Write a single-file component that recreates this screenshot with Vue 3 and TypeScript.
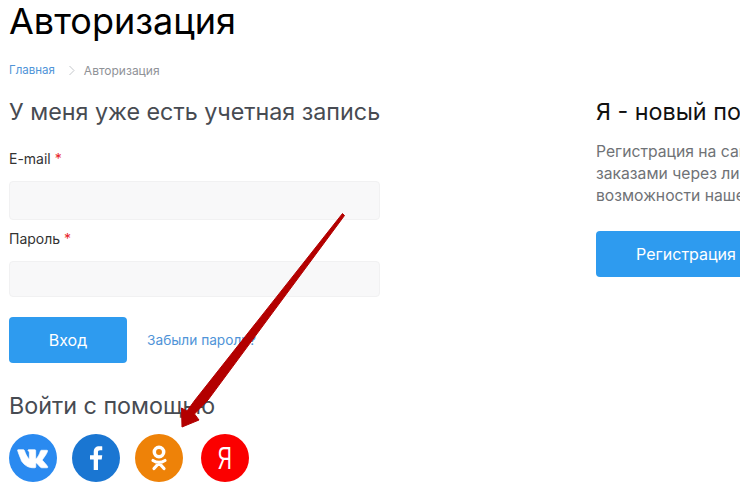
<script setup lang="ts">
const socials = [
  { name: 'vk', color: '#2a8af0' },
  { name: 'fb', color: '#1a76d2' },
  { name: 'ok', color: '#ee8208' },
  { name: 'ya', color: '#fb0000' },
]
</script>

<template>
  <div class="page">
    <h1 class="title">Авторизация</h1>
    <nav class="crumbs">
      <a class="crumb-link">Главная</a>
      <svg class="crumb-sep" width="8" height="11" viewBox="0 0 8 11"><path d="M1.5 1l4.5 4.5L1.5 10" fill="none" stroke="#c4c7cb" stroke-width="1"/></svg>
      <span class="crumb-current">Авторизация</span>
    </nav>
    <div class="columns">
      <section class="left">
        <h2 class="heading">У меня уже есть учетная запись</h2>
        <label class="label first">E-mail <span class="req">*</span></label>
        <div class="input tall"></div>
        <label class="label second">Пароль <span class="req">*</span></label>
        <div class="input"></div>
        <div class="actions">
          <button class="btn login">Вход</button>
          <a class="forgot">Забыли пароль?</a>
        </div>
        <h2 class="heading social-heading">Войти с помощью</h2>
        <div class="socials">
          <div v-for="s in socials" :key="s.name" class="circle" :class="s.name" :style="{ background: s.color }">
            <svg v-if="s.name === 'vk'" width="33" height="21" viewBox="0 0 32 20"><path fill="#fff" stroke="#fff" stroke-width="0.7" d="M1 1.500h5.200c.5 0 .8.200 1 .8 1 3 2.400 6 4 7.600.4.400.8.300.8-.4V4.600c0-1.300-.8-1.700-1.300-2.300-.2-.3 0-.8.500-.8h6.200c.5 0 .7.300.7.800v7.200c0 .6.400.8.700.5 1.500-1.500 3-4 4-7.300.2-.5.500-.7 1-.7h5c.8 0 1 .4.800 1-.8 2.700-3.200 5.500-4.700 7.700-.4.500-.4.900 0 1.400 1.300 1.500 3.600 3.500 4.800 5.700.4.700.1 1.200-.7 1.200h-5c-.7 0-1-.3-1.500-.8-1.100-1.300-2.200-2.700-3.500-3.700-.4-.3-.8-.2-.8.400v3c0 .7-.2 1.100-1.400 1.100-6 .2-9.600-2.500-12.600-6.800C4.300 11.500 2.300 7.500.700 2.500.400 1.800.600 1.500 1 1.500z"/></svg>
            <svg v-else-if="s.name === 'fb'" width="17" height="26" viewBox="0 0 18 28"><path fill="#fff" d="M6 27V15.500H2V11h4V7.600C6 3.500 8.400 1.400 12 1.400c1.500 0 2.800.1 3.200.2v4.100h-2.300c-1.900 0-2.300.9-2.300 2.200V11h4.600l-.6 4.500h-4V27z"/></svg>
            <svg v-else-if="s.name === 'ok'" width="20" height="28" viewBox="0 0 20 28"><circle cx="10" cy="8" r="4.700" fill="none" stroke="#fff" stroke-width="3.500"/><path d="M4 16.500c3.600 2.300 8.400 2.300 12 0M10 19L5 24.500M10 19l5 5.500" fill="none" stroke="#fff" stroke-width="3.200" stroke-linecap="round"/></svg>
            <span v-else class="ya-letter">Я</span>
          </div>
        </div>
      </section>
      <section class="right">
        <h2 class="heading new">Я - новый пользователь</h2>
        <p class="desc">Регистрация на сайте позволит вам следить за<br>заказами через личный кабинет и использовать все<br>возможности нашего магазина без ограничений.</p>
        <button class="btn register">Регистрация</button>
      </section>
    </div>
    <svg class="arrow" width="740" height="493" viewBox="0 0 740 493">
      <path fill="#b30000" stroke="#b30000" stroke-width="1" stroke-linejoin="round" d="M342.500 213.500L344.500 215.500L208 400L194.500 414L199 420L182 427L181.500 408L187 411L195 400z"/>
    </svg>
  </div>
</template>

<style>
html, body { margin: 0; background: #fff; overflow: hidden; }
</style>

<style scoped>
.page {
  position: relative;
  width: 740px;
  height: 493px;
  overflow: hidden;
  padding-left: 9px;
  box-sizing: border-box;
  font-family: "Inter", "Roboto", "Liberation Sans", sans-serif;
}
.title {
  margin: 0;
  font-size: 36px;
  line-height: 42px;
  font-weight: 400;
  color: #000;
}
.crumbs {
  display: flex;
  align-items: center;
  margin-top: 19px;
  height: 18px;
  font-size: 12px;
}
.crumb-link { color: #4f94d8; font-size: 11.5px; }
.crumb-sep { margin: 0 8px 0 13px; }
.crumb-current { color: #8f9297; }
.columns {
  display: grid;
  grid-template-columns: 371px 400px;
  column-gap: 216px;
  margin-top: 19px;
}
.heading {
  margin: 0;
  font-size: 23.3px;
  line-height: 28px;
  font-weight: 400;
  color: #474b52;
  white-space: nowrap;
}
.label {
  display: block;
  font-size: 14px;
  line-height: 18px;
  color: #333;
}
.label.first { margin-top: 24px; }
.label.second { margin-top: 10px; }
.req { color: #e8242a; }
.input {
  height: 36px;
  margin-top: 13px;
  background: #f8f8f9;
  border: 1px solid #f1f1f2;
  border-radius: 4px;
  box-sizing: border-box;
}
.input.tall { height: 39px; margin-top: 13px; }
.actions {
  display: flex;
  align-items: center;
  margin-top: 20px;
}
.btn {
  border: 0;
  border-radius: 4px;
  background: #2e9bef;
  color: #fff;
  font: inherit;
  font-size: 16px;
  padding: 0;
}
.login { width: 118px; height: 46px; }
.forgot {
  margin-left: 20px;
  color: #4f94d8;
  font-size: 13.7px;
}
.social-heading { margin-top: 29px; }
.socials {
  display: flex;
  margin-top: 14px;
}
.circle {
  width: 48px;
  height: 48px;
  border-radius: 50%;
  display: flex;
  align-items: center;
  justify-content: center;
  margin-right: 15px;
}
.circle.ok { margin-right: 18px; }
.ya-letter {
  display: block;
  color: #fff;
  font-size: 32px;
  line-height: 1;
  font-family: "Liberation Sans", sans-serif;
  transform: scaleX(0.62);
}
.new { color: #111; }
.desc {
  margin: 15px 0 0;
  font-size: 15.7px;
  line-height: 22px;
  color: #6f7276;
  white-space: nowrap;
}
.register {
  display: block;
  width: 180px;
  height: 46px;
  margin-top: 24px;
}
.arrow {
  position: absolute;
  left: 0;
  top: 0;
  pointer-events: none;
}
</style>
